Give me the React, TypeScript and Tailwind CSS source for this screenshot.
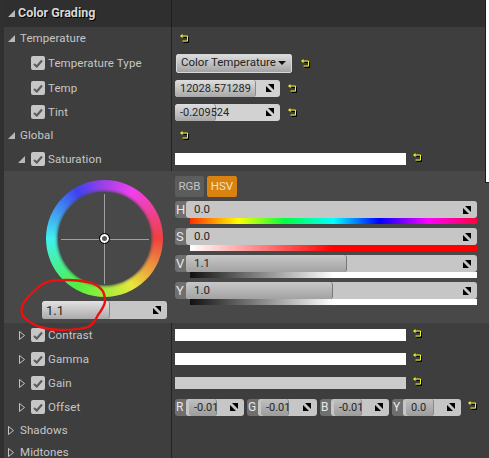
import type { ReactNode } from "react";

function Caret({ open }: { open: boolean }) {
  if (open) {
    return (
      <svg width="7" height="7" viewBox="0 0 7 7" className="shrink-0">
        <polygon points="7,0 7,7 0,7" fill="#b8b8b8" />
      </svg>
    );
  }
  return (
    <svg width="6" height="9" viewBox="0 0 6 9" className="shrink-0">
      <polygon points="0.5,0.5 5.5,4.5 0.5,8.5" fill="none" stroke="#c4c4c4" strokeWidth="1" />
    </svg>
  );
}

function Check() {
  return (
    <span className="flex h-[14px] w-[14px] shrink-0 items-center justify-center rounded-[2px] bg-[#c6c6c6]">
      <svg width="10" height="9" viewBox="0 0 10 9">
        <path d="M1 5 L3.8 7.5 L9 1.5" fill="none" stroke="#5c5c5c" strokeWidth="2.2" />
      </svg>
    </span>
  );
}

function Reset({ className = "" }: { className?: string }) {
  return (
    <svg width="9" height="9" viewBox="0 0 9 9" className={`shrink-0 ${className}`}>
      <path d="M2.5 2.5H7.5V7.5H2.5" transform="translate(1 1)" fill="none" stroke="#000" strokeWidth="1" />
      <path d="M1.5 2H7.5V7H2.5" fill="none" stroke="#f6f61e" strokeWidth="1" />
      <polygon points="0,2 2.5,0 2.5,4" fill="#f6f61e" />
    </svg>
  );
}

function Spin() {
  return (
    <svg width="8" height="8" viewBox="0 0 8 8" className="shrink-0">
      <polygon points="2,0 8,0 8,6" fill="#000" />
      <polygon points="0,2 6,8 0,8" fill="#000" />
    </svg>
  );
}

function Row({ h, left, children }: { h: string; left: ReactNode; children?: ReactNode }) {
  return (
    <div className={`flex ${h}`}>
      <div className="flex w-[167px] shrink-0 items-center text-[11.5px] tracking-[0.1px] text-[#c6c6c6]">{left}</div>
      <div className="w-px shrink-0 bg-[#232323]" />
      <div className="flex min-w-0 flex-1 items-center pl-[3px]">{children}</div>
    </div>
  );
}

function Prop({ label, indent, caret }: { label: string; indent: string; caret?: boolean | "open" }) {
  return (
    <div className={`flex items-center ${indent}`}>
      {caret !== undefined && (
        <span className="mr-[6px] flex w-[7px] justify-center">
          <Caret open={caret === "open"} />
        </span>
      )}
      <Check />
      <span className="ml-[3px] pt-[2px]">{label}</span>
    </div>
  );
}

function Section({ label, open }: { label: string; open: boolean }) {
  return (
    <div className="flex items-center">
      <span className="flex w-[16px] justify-start pl-[4px]">
        <Caret open={open} />
      </span>
      <span className="pt-[1px]">{label}</span>
    </div>
  );
}

function NumField({ value, fill, w, bg = "bg-[#d2d2d2]" }: { value: string; fill: string; w: string; bg?: string }) {
  return (
    <div className={`relative flex h-[17px] items-center justify-end overflow-hidden rounded-[3px] pr-[6px] ${w} ${bg}`}>
      <div
        className={`absolute inset-y-0 left-0 rounded-[3px] border-r border-[#8a8a8a] bg-gradient-to-b from-[#dedede] to-[#a8a8a8] ${fill}`}
      />
      <span className="absolute left-[5px] text-[11px] leading-none text-[#262626]">{value}</span>
      <span className="relative">
        <Spin />
      </span>
    </div>
  );
}

function Channel({ label, value, fill, strip }: { label: string; value: string; fill?: string; strip: string }) {
  return (
    <div>
      <div className="flex h-[17px]">
        <span className="flex w-[14px] items-center rounded-l-[3px] bg-[#6f6f6f] pl-[1px] text-[13px] leading-none text-[#e8e8e8]">
          {label}
        </span>
        <div className="relative -ml-[3px] flex h-[17px] w-[291px] items-center justify-end overflow-hidden rounded-[3px] bg-[#c6c6c6] pr-[6px]">
          {fill && (
            <div
              className={`absolute inset-y-0 left-0 rounded-[3px] border-r border-[#777] bg-gradient-to-b from-[#c8c8c8] to-[#a2a2a2] ${fill}`}
            />
          )}
          <span className="absolute left-[8px] text-[11.5px] leading-none text-[#262626]">{value}</span>
          <span className="relative">
            <Spin />
          </span>
        </div>
      </div>
      <div className={`ml-[15px] h-[6px] w-[287px] ${strip}`} />
    </div>
  );
}

function Mini({ label, value, fill, w }: { label: string; value: string; fill: string; w: string }) {
  return (
    <div className="flex h-[17px]">
      <span className="flex w-[14px] items-center rounded-l-[3px] bg-[#6f6f6f] pl-[1px] text-[12px] leading-none text-[#e8e8e8]">
        {label}
      </span>
      <div className={`relative -ml-[3px] flex h-[17px] items-center justify-end overflow-hidden rounded-[3px] bg-[#c6c6c6] pr-[6px] ${w}`}>
        <div className={`absolute inset-y-0 left-[3px] rounded-[3px] border-r border-[#888] bg-gradient-to-b from-[#c0c0c0] to-[#9c9c9c] ${fill}`} />
        <span className="absolute left-[8px] text-[11px] leading-none text-[#262626]">{value}</span>
        <span className="relative">
          <Spin />
        </span>
      </div>
    </div>
  );
}

function Swatch({ color }: { color: string }) {
  return (
    <div className="flex items-center">
      <div className={`h-[12px] w-[231px] ${color}`} />
      <Reset className="ml-[7px] -mt-[4px]" />
    </div>
  );
}

export default function App() {
  return (
    <div className="relative flex h-[458px] w-[489px] overflow-hidden bg-[#3e3e3e] font-['Roboto',sans-serif]">
      <div className="w-[4px] shrink-0 bg-[#303030]" />
      <div className="min-w-0 flex-1">
        {/* category header */}
        <div className="flex h-[27px] bg-[#2f2f2f]">
          <div className="flex w-[167px] items-center">
            <span className="flex w-[14px] justify-start pl-[4px]">
              <Caret open />
            </span>
            <span className="text-[12.5px] font-bold text-[#d8d8d8] [text-shadow:1px_1px_0_#000]">Color Grading</span>
          </div>
          <div className="w-px bg-[#1e1e1e]" />
        </div>

        <Row h="h-[23px]" left={<Section label="Temperature" open />}>
          <Reset className="ml-[5px]" />
        </Row>
        <Row h="h-[26px]" left={<Prop label="Temperature Type" indent="pl-[27px]" />}>
          <div className="ml-[1px] flex h-[19px] w-[116px] items-center rounded-[2px] border border-[#d8d8d8] bg-gradient-to-b from-[#dcdcdc] to-[#a4a4a4] pl-[4px] text-[11.5px] text-[#222]">
            <span>Color Temperature</span>
            <svg width="8" height="4" viewBox="0 0 8 4" className="ml-[2px] shrink-0">
              <polygon points="0,0 8,0 4,4" fill="#111" />
            </svg>
          </div>
          <Reset className="ml-[9px]" />
        </Row>
        <Row h="h-[24px]" left={<Prop label="Temp" indent="pl-[27px]" />}>
          <NumField value="12028.571289" fill="w-[81px]" w="w-[105px]" />
          <Reset className="ml-[8px]" />
        </Row>
        <Row h="h-[24px]" left={<Prop label="Tint" indent="pl-[27px]" />}>
          <NumField value="-0.209524" fill="w-[41px]" w="w-[105px]" />
          <Reset className="ml-[8px]" />
        </Row>
        <Row h="h-[23px]" left={<Section label="Global" open />}>
          <Reset className="ml-[5px]" />
        </Row>
        <Row h="h-[24px]" left={<Prop label="Saturation" indent="pl-[14px]" caret="open" />}>
          <Swatch color="bg-white" />
        </Row>

        {/* color wheel panel */}
        <div className="flex h-[152px] bg-[#484848]">
          <div className="w-[171px] shrink-0 pl-[38px] pt-[9px]">
            <div className="relative ml-[4px] flex h-[117px] w-[117px] items-center justify-center rounded-full bg-[conic-gradient(#a040e8,#f040f0_30deg,#f04040_90deg,#e8e83c_150deg,#50f040_210deg,#40f0f0_270deg,#4040f0_330deg,#a040e8)]">
              <div className="h-[93px] w-[93px] rounded-full bg-[#484848] shadow-[0_0_3px_1px_#484848]" />
              <div className="absolute left-[15px] top-1/2 h-px w-[88px] bg-[#a0a0a0]" />
              <div className="absolute left-[58px] top-[14px] h-[90px] w-px bg-[#a0a0a0]" />
              <div className="absolute left-[54px] top-[54px] h-[9px] w-[9px] rounded-full border-2 border-white bg-[#555] outline outline-1 outline-black" />
            </div>
            <div className="relative mt-[4px] flex h-[18px] w-[125px] items-center justify-end overflow-hidden rounded-[3px] bg-[#c6c6c6] pr-[6px]">
              <div className="absolute inset-y-0 left-0 w-[68px] rounded-[3px] border-r border-[#888] bg-gradient-to-b from-[#e2e2e2] to-[#ababab]" />
              <span className="absolute left-[4px] text-[13px] leading-none text-[#262626]">1.1</span>
              <span className="relative">
                <Spin />
              </span>
            </div>
          </div>
          <div className="pt-[5px]">
            <div className="flex gap-[3px]">
              <span className="flex h-[21px] w-[29px] items-center justify-center rounded-[2px] bg-[#5c5c5c] text-[11.5px] text-[#c4c4c4]">RGB</span>
              <span className="flex h-[21px] w-[30px] items-center justify-center rounded-[2px] bg-[#d9820f] text-[11.5px] text-[#f0e0c8]">HSV</span>
            </div>
            <div className="mt-[4px] flex flex-col gap-[4px]">
              <Channel
                label="H"
                value="0.0"
                strip="bg-[linear-gradient(90deg,#ff3000,#ffff00_17%,#00ff40_33%,#00ffff_50%,#0000ff_66%,#ff00ff_83%,#ff0040)]"
              />
              <Channel label="S" value="0.0" strip="bg-[linear-gradient(90deg,#fff,#ff0000_50%,#ff0000)]" />
              <Channel label="V" value="1.1" fill="w-[161px]" strip="bg-[linear-gradient(90deg,#111,#fff_50%,#fff)]" />
              <Channel label="Y" value="1.0" fill="w-[147px]" strip="bg-[linear-gradient(90deg,#111,#fff_50%,#fff)]" />
            </div>
          </div>
        </div>

        <Row h="h-[24px]" left={<Prop label="Contrast" indent="pl-[14px]" caret />}>
          <Swatch color="bg-white" />
        </Row>
        <Row h="h-[24px]" left={<Prop label="Gamma" indent="pl-[14px]" caret />}>
          <Swatch color="bg-white" />
        </Row>
        <Row h="h-[24px]" left={<Prop label="Gain" indent="pl-[14px]" caret />}>
          <Swatch color="bg-[#cbcbcb]" />
        </Row>
        <Row h="h-[24px]" left={<Prop label="Offset" indent="pl-[14px]" caret />}>
          <div className="flex items-center gap-[3px]">
            <Mini label="R" value="-0.01" fill="w-[28px]" w="w-[58px]" />
            <Mini label="G" value="-0.01" fill="w-[28px]" w="w-[59px]" />
            <Mini label="B" value="-0.01" fill="w-[28px]" w="w-[58px]" />
            <Mini label="Y" value="0.0" fill="w-[28px]" w="w-[58px]" />
          </div>
          <Reset className="ml-[7px] -mt-[4px]" />
        </Row>
        <Row h="h-[22px]" left={<Section label="Shadows" open={false} />} />
        <Row h="h-[23px]" left={<Section label="Midtones" open={false} />} />
      </div>

      {/* scrollbar thumb */}
      <div className="absolute right-0 top-0 h-[183px] w-[4px] border-b border-l border-[#1c1c1c] bg-white" />

      {/* red freehand mark */}
      <svg width="120" height="70" viewBox="0 0 120 70" className="absolute left-0 top-[272px]">
        <path
          d="M102 18 C97 12 90 10 87 10 C78 8 72 8 67 8 C58 8 52 8 47 10 C40 13 36 17 32 21 C27 26 23 30 22 35 C21 40 22 44 25 46 C29 50 34 53 40 55 C47 57 53 58 60 58 C72 58 84 57 90 54 C94 51 96 47 98 43 C101 39 104 35 105 30 C105 26 105 22 102 18"
          fill="none"
          stroke="#ee1010"
          strokeWidth="2.4"
        />
      </svg>
    </div>
  );
}
